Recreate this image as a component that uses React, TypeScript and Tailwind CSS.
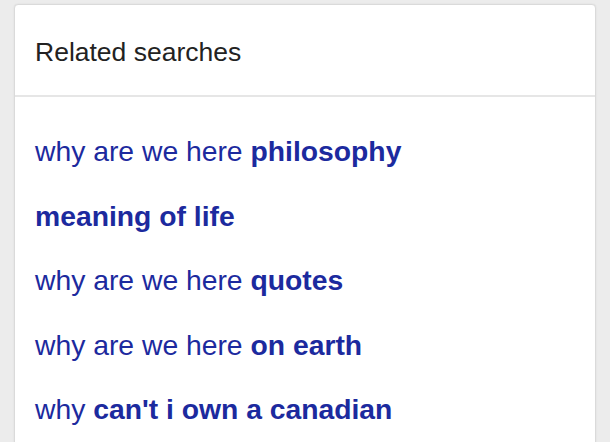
const searches: { plain: string; bold: string }[] = [
  { plain: "why are we here ", bold: "philosophy" },
  { plain: "", bold: "meaning of life" },
  { plain: "why are we here ", bold: "quotes" },
  { plain: "why are we here ", bold: "on earth" },
  { plain: "why ", bold: "can't i own a canadian" },
];

const App: React.FC = () => {
  return (
    <div className="w-[610px] h-[442px] overflow-hidden bg-[#ececec] pt-[4px] pl-[14px] font-['Liberation_Sans',Arial,sans-serif]">
      <div className="w-[582px] h-[460px] bg-white border border-[#dadada] rounded-t-[4px] shadow-[0_0_2px_rgba(0,0,0,0.08)]">
        <div className="h-[92px] pt-[34px] px-[20px] border-b-2 border-[#e6e6e6]">
          <h2 className="text-[26.5px] leading-[26px] text-[#222]">Related searches</h2>
        </div>
        <ul className="pt-[22px] px-[20px]">
          {searches.map((s, i) => (
            <li key={i} className="text-[28.3px] leading-[64.5px] text-[#1c2a9e] whitespace-nowrap">
              {s.plain}
              <b className="font-bold">{s.bold}</b>
            </li>
          ))}
        </ul>
      </div>
    </div>
  );
};

export default App;
